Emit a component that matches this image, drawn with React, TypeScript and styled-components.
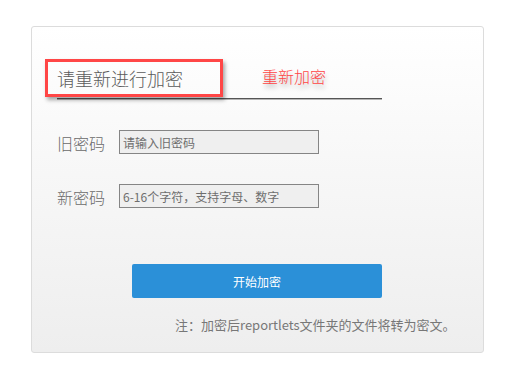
import React from "react";
import styled, { createGlobalStyle } from "styled-components";

const GlobalStyle = createGlobalStyle`
  html, body { margin: 0; padding: 0; background: #ffffff; }
  body { font-family: "Noto Sans CJK SC", "Noto Sans", sans-serif; }
  * { box-sizing: border-box; }
`;

const Panel = styled.div`
  margin: 26px 0 0 31px;
  width: 453px;
  height: 327px;
  border: 1px solid #dcdcdc;
  border-radius: 3px;
  background: linear-gradient(to bottom, #ffffff 0%, #f7f7f7 45%, #eeeeee 100%);
  display: flex;
  flex-direction: column;
`;

const Header = styled.div`
  margin: 39px 0 0 25px;
  width: 325px;
  height: 33px;
  display: flex;
  align-items: flex-start;
  border-bottom: 1px solid #555555;
  box-shadow: 0 1px 0 #b5b5b5;
`;

const Title = styled.div`
  position: relative;
  font-size: 18px;
  font-weight: 300;
  line-height: 24px;
  color: #5a5a5a;
  white-space: nowrap;
`;

const Highlight = styled.div`
  position: absolute;
  left: -12px;
  top: -7px;
  width: 178px;
  height: 38px;
  border: 3px solid #ff4646;
  box-shadow: 2px 3px 4px rgba(0, 0, 0, 0.35);
  pointer-events: none;
`;

const Annotation = styled.div`
  margin-left: 79px;
  font-size: 16px;
  font-weight: 300;
  line-height: 20px;
  color: #ff4444;
  text-shadow: 1px 4px 4px rgba(0, 0, 0, 0.25);
  white-space: nowrap;
`;

const Form = styled.div`
  margin: 31px 0 0 25px;
  display: flex;
  flex-direction: column;
  gap: 30px;
`;

const Row = styled.div`
  display: flex;
  align-items: center;
  height: 24px;
`;

const Label = styled.label`
  width: 62px;
  font-size: 16px;
  font-weight: 300;
  line-height: 24px;
  color: #6a6a6a;
  padding-top: 2px;
`;

const Input = styled.input`
  width: 200px;
  height: 24px;
  margin: 0;
  padding: 0 3px;
  border: 1px solid #858585;
  background: #efefef;
  font-family: "Noto Sans CJK SC", "Noto Sans", sans-serif;
  font-size: 12px;
  color: #555555;
  outline: none;
  &::placeholder { color: #6e6e6e; opacity: 1; }
`;

const Button = styled.button`
  margin: 56px 0 0 100px;
  width: 250px;
  height: 34px;
  border: none;
  border-radius: 2px;
  background: #2b90d8;
  color: #ffffff;
  font-family: "Noto Sans CJK SC", "Noto Sans", sans-serif;
  font-size: 12px;
  cursor: pointer;
`;

const Note = styled.div`
  margin: 17px 0 0 143px;
  font-size: 13px;
  line-height: 20px;
  color: #777777;
  white-space: nowrap;
`;

export default function App() {
  return (
    <>
      <GlobalStyle />
      <Panel>
        <Header>
          <Title>
            请重新进行加密
            <Highlight />
          </Title>
          <Annotation>重新加密</Annotation>
        </Header>
        <Form>
          <Row>
            <Label>旧密码</Label>
            <Input type="password" placeholder="请输入旧密码" />
          </Row>
          <Row>
            <Label>新密码</Label>
            <Input type="password" placeholder="6-16个字符，支持字母、数字" />
          </Row>
        </Form>
        <Button>开始加密</Button>
        <Note>注：加密后reportlets文件夹的文件将转为密文。</Note>
      </Panel>
    </>
  );
}
